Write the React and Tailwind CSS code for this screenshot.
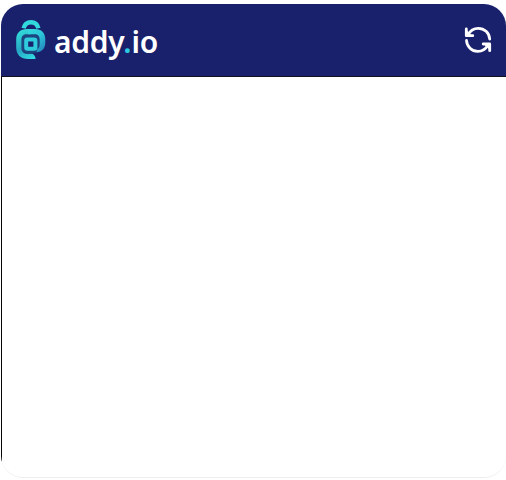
function Logo() {
  return (
    <svg width="30" height="40" viewBox="0 0 30 40" fill="none" className="shrink-0">
      <defs>
        <linearGradient id="ring" x1="4" y1="8" x2="27" y2="33" gradientUnits="userSpaceOnUse">
          <stop stopColor="#35e3dc" />
          <stop offset="0.55" stopColor="#2cc6da" />
          <stop offset="1" stopColor="#237fb8" />
        </linearGradient>
        <linearGradient id="tail" x1="2" y1="10" x2="16" y2="39" gradientUnits="userSpaceOnUse">
          <stop stopColor="#33dedb" />
          <stop offset="0.6" stopColor="#26a5c4" />
          <stop offset="1" stopColor="#30dbe0" />
        </linearGradient>
      </defs>
      <path d="M7.6 8.3C8.6 4.2 11.2 2.3 15 2.3s6.4 1.900 7.400 6" stroke="#32d9dc" strokeWidth="4.4" />
      <rect x="5" y="13" width="19" height="20" rx="5" fill="#1c4580" />
      <path d="M19.500 39h-7C4.500 39 .2 34.500 .2 27.500v-8C.2 13 4.500 9 11 9h4v5.300h-4c-3.800 0-5.600 2-5.600 5.700v7.500c0 4.200 2.200 6.300 6.600 6.300h4.500c2 1 3 3 3 5.200z" fill="url(#tail)" />
      <path d="M12 9h7c6.500 0 10.300 4 10.300 10v3.500c0 6-3.300 9.400-8.600 9.800l.3-3c1.800-.8 2.700-2.500 2.700-5V20c0-3.700-1.500-5.700-5.200-5.700H12z" fill="url(#ring)" />
      <rect x="10.200" y="19.500" width="9.200" height="9.200" rx="1.200" fill="#19216c" stroke="#2fcbdc" strokeWidth="4" />
    </svg>
  );
}

function RefreshIcon() {
  return (
    <svg width="28" height="28" viewBox="0 0 28 28" fill="none" stroke="#fff" strokeWidth="2.8">
      <path d="M4 8.8C6.2 4.6 10 2.3 14.3 2.3c6 0 11 4.500 11.400 10.700" strokeLinecap="round" />
      <path d="M2.5 14.5c.4 6.200 5.200 10.900 11.200 10.900 4.300 0 8.100-2.300 10.300-6.500" strokeLinecap="round" />
      <path d="M2.3 3v6.700h6.500" strokeLinecap="round" strokeLinejoin="round" />
      <path d="M19.2 18h6.500v6.700" strokeLinecap="round" strokeLinejoin="round" />
      <path d="M2.5 4v5.500h5.500zM25.500 23.700v-5.500H20z" fill="#fff" stroke="none" />
    </svg>
  );
}

export default function App() {
  return (
    <div className="h-[480px] w-[506px] overflow-hidden bg-white pl-px pt-1">
      <div className="h-[474px] w-[505px] overflow-hidden rounded-[22px] border-b border-[#ededed] bg-white">
        <header className="flex h-[73px] items-center justify-between border-b border-[#111322] bg-[#19216c] pl-[15px] pr-[14px]">
          <div className="flex items-center">
            <Logo />
            <span className="ml-[8px] pt-[3px] font-['Noto_Sans',sans-serif] text-[30px] font-semibold leading-none tracking-[-0.25px] text-white">
              addy<span className="text-[#2bc8df]">.</span>io
            </span>
          </div>
          <button aria-label="Refresh">
            <RefreshIcon />
          </button>
        </header>
        <main className="h-[400px] border-l border-[#050505]" />
      </div>
    </div>
  );
}
